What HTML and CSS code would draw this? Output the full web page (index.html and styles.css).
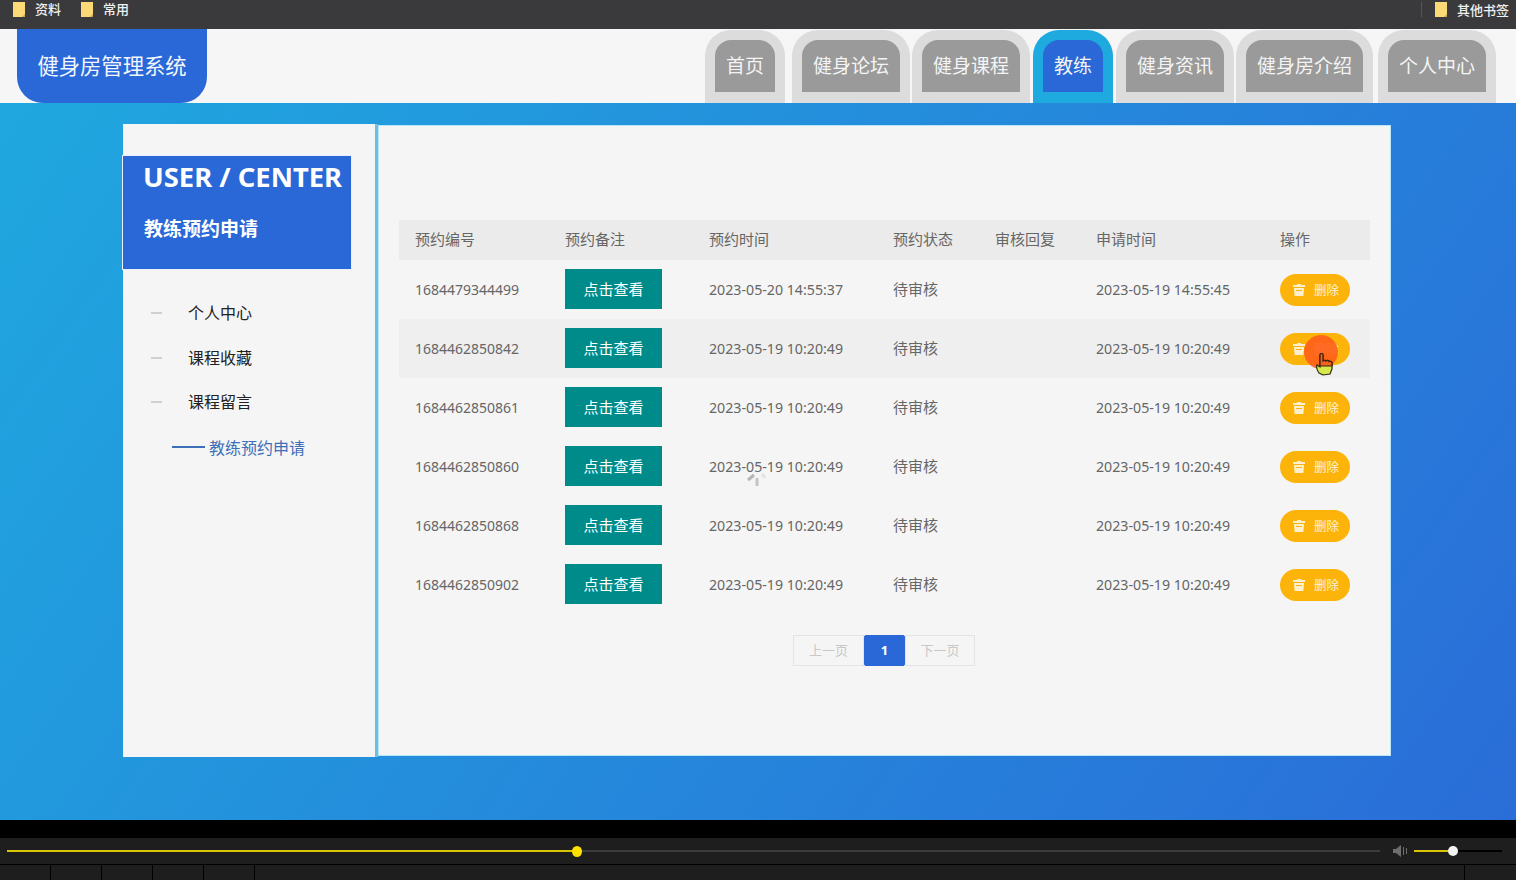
FILE: index.html
```html
<!DOCTYPE html>
<html lang="zh-CN">
<head>
    <meta charset="UTF-8">
    <title>健身房管理系统</title>
    <link rel="stylesheet" href="styles.css">
</head>
<body>
    <div class="bookmarks">
        <span class="mark"><svg class="folder" viewBox="0 0 14 15"><path d="M1 0h12v15H1z" fill="#fbd977"/><path d="M10 15l3-3v3z" fill="#c9a94e"/></svg>资料</span>
        <span class="mark"><svg class="folder" viewBox="0 0 14 15"><path d="M1 0h12v15H1z" fill="#fbd977"/><path d="M10 15l3-3v3z" fill="#c9a94e"/></svg>常用</span>
        <span class="mark mark-other"><svg class="folder" viewBox="0 0 14 15"><path d="M1 0h12v15H1z" fill="#fbd977"/><path d="M10 15l3-3v3z" fill="#c9a94e"/></svg>其他书签</span>
    </div>

    <div class="page">
        <header class="header">
            <div class="logo">健身房管理系统</div>
            <nav class="nav">
                <a class="tab"><span>首页</span></a>
                <a class="tab"><span>健身论坛</span></a>
                <a class="tab"><span>健身课程</span></a>
                <a class="tab active"><span>教练</span></a>
                <a class="tab"><span>健身资讯</span></a>
                <a class="tab"><span>健身房介绍</span></a>
                <a class="tab"><span>个人中心</span></a>
            </nav>
        </header>

        <main class="main">
            <aside class="side">
                <div class="side-title">
                    <h2>USER / CENTER</h2>
                    <h3>教练预约申请</h3>
                </div>
                <ul class="side-menu">
                    <li>个人中心</li>
                    <li>课程收藏</li>
                    <li>课程留言</li>
                    <li class="current">教练预约申请</li>
                </ul>
            </aside>

            <section class="content">
                <table class="list">
                    <colgroup>
                        <col class="c1"><col class="c2"><col class="c3"><col class="c4"><col class="c5"><col class="c6"><col class="c7">
                    </colgroup>
                    <thead>
                        <tr><th>预约编号</th><th>预约备注</th><th>预约时间</th><th>预约状态</th><th>审核回复</th><th>申请时间</th><th>操作</th></tr>
                    </thead>
                    <tbody>
                        <tr>
                            <td class="id">1684479344499</td>
                            <td><button class="view">点击查看</button></td>
                            <td class="num">2023-05-20 14:55:37</td>
                            <td>待审核</td>
                            <td></td>
                            <td class="num">2023-05-19 14:55:45</td>
                            <td class="ops"><button class="del"><svg viewBox="0 0 12 12"><path d="M4 0h4v1h4v2H0V1h4z M1 4h10l-.6 8H1.600z M3 6v1h6V6z" fill="#fff" fill-rule="evenodd"/></svg>删除</button></td>
                        </tr>
                        <tr class="hover">
                            <td class="id">1684462850842</td>
                            <td><button class="view">点击查看</button></td>
                            <td class="num">2023-05-19 10:20:49</td>
                            <td>待审核</td>
                            <td></td>
                            <td class="num">2023-05-19 10:20:49</td>
                            <td class="ops"><button class="del"><svg viewBox="0 0 12 12"><path d="M4 0h4v1h4v2H0V1h4z M1 4h10l-.6 8H1.600z M3 6v1h6V6z" fill="#fff" fill-rule="evenodd"/></svg>删除</button></td>
                        </tr>
                        <tr>
                            <td class="id">1684462850861</td>
                            <td><button class="view">点击查看</button></td>
                            <td class="num">2023-05-19 10:20:49</td>
                            <td>待审核</td>
                            <td></td>
                            <td class="num">2023-05-19 10:20:49</td>
                            <td class="ops"><button class="del"><svg viewBox="0 0 12 12"><path d="M4 0h4v1h4v2H0V1h4z M1 4h10l-.6 8H1.600z M3 6v1h6V6z" fill="#fff" fill-rule="evenodd"/></svg>删除</button></td>
                        </tr>
                        <tr>
                            <td class="id">1684462850860</td>
                            <td><button class="view">点击查看</button></td>
                            <td class="num">2023-05-19 10:20:49</td>
                            <td>待审核</td>
                            <td></td>
                            <td class="num">2023-05-19 10:20:49</td>
                            <td class="ops"><button class="del"><svg viewBox="0 0 12 12"><path d="M4 0h4v1h4v2H0V1h4z M1 4h10l-.6 8H1.600z M3 6v1h6V6z" fill="#fff" fill-rule="evenodd"/></svg>删除</button></td>
                        </tr>
                        <tr>
                            <td class="id">1684462850868</td>
                            <td><button class="view">点击查看</button></td>
                            <td class="num">2023-05-19 10:20:49</td>
                            <td>待审核</td>
                            <td></td>
                            <td class="num">2023-05-19 10:20:49</td>
                            <td class="ops"><button class="del"><svg viewBox="0 0 12 12"><path d="M4 0h4v1h4v2H0V1h4z M1 4h10l-.6 8H1.600z M3 6v1h6V6z" fill="#fff" fill-rule="evenodd"/></svg>删除</button></td>
                        </tr>
                        <tr>
                            <td class="id">1684462850902</td>
                            <td><button class="view">点击查看</button></td>
                            <td class="num">2023-05-19 10:20:49</td>
                            <td>待审核</td>
                            <td></td>
                            <td class="num">2023-05-19 10:20:49</td>
                            <td class="ops"><button class="del"><svg viewBox="0 0 12 12"><path d="M4 0h4v1h4v2H0V1h4z M1 4h10l-.6 8H1.600z M3 6v1h6V6z" fill="#fff" fill-rule="evenodd"/></svg>删除</button></td>
                        </tr>
                    </tbody>
                </table>

                <div class="pager">
                    <a class="pg">上一页</a>
                    <a class="pg pg-on">1</a>
                    <a class="pg">下一页</a>
                </div>
            </section>
        </main>
    </div>

    <div class="player">
        <div class="blackbar"></div>
        <div class="seek-row">
            <div class="seek"><div class="seek-fill"></div></div>
            <svg class="vol-icon" viewBox="0 0 15 12"><path d="M0 4h3l5-4v12L3 8H0z" fill="#6e6e6e"/><path d="M10.500 2v8M13.500 3v6" stroke="#6e6e6e"/></svg>
            <div class="vol"><div class="vol-fill"></div></div>
        </div>
        <div class="cells">
            <i></i><i></i><i></i><i></i><i></i>
            <i class="cell-last"></i>
        </div>
    </div>

    <!-- recorded cursor highlight and loading spinner sit on top of the page -->
    <div class="click-dot"></div>
    <svg class="hand" viewBox="0 0 18 24">
        <path d="M3 21c-2-3-3-6-2-8l3 2V3c0-2 3-2 3 0v6c1-1 3-1 3 0 1-1 3-1 3 .5 1-.5 3 0 3 1.500V17l-2 5-7 1z" fill="#d8e84a" stroke="#2a2a10" stroke-width="1.200"/>
        <path d="M4 3c0-2 3-2 3 0v6c1-1 3-1 3 0 1-1 3-1 3 .5 1-.5 3 0 3 1.500v3H4z" fill="#f2641e" stroke="#3a2010" stroke-width="1.200"/>
    </svg>
    <svg class="spinner" viewBox="0 0 22 16">
        <path d="M2 9l6-5" stroke="#b5b5b5" stroke-width="3"/>
        <path d="M11 7v8" stroke="#c4c4c4" stroke-width="3"/>
        <path d="M16 3l3 4" stroke="#e4e4e4" stroke-width="3"/>
    </svg>
</body>
</html>
```

FILE: styles.css
```css
* {
    box-sizing: border-box;
}

body {
    margin: 0;
    width: 1516px;
    height: 880px;
    overflow: hidden;
    display: flex;
    flex-direction: column;
    position: relative;
    font-family: "Noto Sans", "Noto Sans CJK SC", sans-serif;
    background: #000;
}

.bookmarks {
    height: 29px;
    flex: none;
    display: flex;
    align-items: flex-start;
    padding: 0 7px 0 12px;
    background: #3a393b;
    color: #f0f0f0;
    font-family: "Noto Sans CJK SC", sans-serif;
    font-size: 13px;
    font-weight: 500;
    line-height: 15px;
}

.mark {
    display: flex;
    align-items: center;
    margin-right: 19px;
}

.folder {
    width: 14px;
    height: 15px;
    margin: 2px 9px 0 0;
}

.mark-other {
    margin: 2px 0 0 auto;
    padding-left: 12px;
    border-left: 1px solid #555;
}

.mark-other .folder {
    margin-top: 0;
}

.page {
    flex: 1;
    display: flex;
    flex-direction: column;
    background: linear-gradient(125deg, #1fa9df, #2a6dd8);
}

.header {
    height: 74px;
    flex: none;
    display: flex;
    justify-content: space-between;
    padding: 0 20px 0 17px;
    background: #f6f6f6;
}

.logo {
    width: 190px;
    height: 74px;
    background: #2968d6;
    border-radius: 0 0 26px 26px;
    color: #f2f6ff;
    font-size: 21.300px;
    line-height: 74px;
    text-align: center;
}

.nav {
    display: flex;
    gap: 2px;
}

.tab {
    display: block;
    padding: 10px 10px 11px;
    margin-top: 1px;
    height: 73px;
    background: #dcdcdc;
    border-radius: 26px 26px 0 0;
}

.tab:nth-child(1) {
    margin-right: 5px;
}

.tab:nth-child(3),
.tab:nth-child(4) {
    margin-right: 1px;
}

.tab:nth-child(7) {
    margin-left: 3px;
}

.tab span {
    display: block;
    height: 52px;
    padding: 0 11px;
    background: #9a9a9a;
    border-radius: 16px 16px 0 0;
    color: #f4f4f4;
    font-size: 19px;
    line-height: 52px;
}

.tab.active {
    background: #1ea9df;
}

.tab.active span {
    background: #2968d6;
}

.main {
    flex: 1;
    display: flex;
    align-items: flex-start;
    padding: 21px 0 0 123px;
}

.side {
    width: 255px;
    height: 633px;
    padding-top: 32px;
    background: #f5f5f5;
    border-right: 3px solid #6dbfe2;
}

.side-title {
    width: 228px;
    height: 113px;
    padding: 0 0 0 21px;
    background: #2968d6;
    color: #fff;
    outline: 1px solid #e9eefb;
}

.side-title h2 {
    margin: 0 0 0 -1px;
    padding-top: 2px;
    font-size: 27.400px;
    font-weight: 700;
    line-height: 38px;
    white-space: nowrap;
}

.side-title h3 {
    margin: 0;
    padding-top: 19px;
    font-size: 19px;
    font-weight: 700;
    line-height: 28px;
}

.side-menu {
    list-style: none;
    margin: 0;
    padding: 22px 0 0 65px;
    color: #222;
    font-size: 16px;
    line-height: 44.500px;
}

.side-menu li {
    position: relative;
}

.side-menu li::before {
    content: "";
    position: absolute;
    left: -37px;
    top: 21px;
    width: 11px;
    height: 2px;
    background: #cfcfcf;
}

.side-menu .current {
    padding: 1px 0 0 21px;
    color: #3d6fb8;
}

.side-menu .current::before {
    left: -16px;
    width: 33px;
    background: #3d6fb8;
}

.content {
    width: 1013px;
    height: 631px;
    margin-top: 1px;
    padding: 94px 21px 0 20px;
    background: #f5f5f5;
    border: 1px solid #b9e6f6;
}

.list {
    width: 971px;
    table-layout: fixed;
    border-collapse: collapse;
    font-size: 15px;
    color: #666;
}

.c1 { width: 150px; }
.c2 { width: 144px; }
.c3 { width: 184px; }
.c4 { width: 102px; }
.c5 { width: 101px; }
.c6 { width: 184px; }
.c7 { width: 106px; }

.list th {
    height: 40px;
    padding: 0 0 3px 16px;
    background: #ebebeb;
    font-weight: 400;
    text-align: left;
}

.list td {
    height: 59px;
    padding: 0 0 2px 16px;
}

.list .num {
    padding-bottom: 0;
    font-size: 14.200px;
}

.list .id {
    padding-bottom: 0;
    font-size: 14px;
}

.list .ops {
    padding-bottom: 0;
}

.list .hover td {
    background: #efefef;
}

.view {
    width: 97px;
    height: 40px;
    padding: 0;
    border: none;
    display: block;
    background: #008b8b;
    color: #fff;
    font-family: inherit;
    font-size: 15px;
}

.del {
    width: 70px;
    height: 32px;
    padding: 0 0 0 13px;
    border: none;
    border-radius: 16px;
    display: flex;
    align-items: center;
    gap: 9px;
    background: #fdb40a;
    color: #fff3d6;
    font-family: inherit;
    font-size: 12.500px;
}

.del svg {
    width: 12px;
    height: 12px;
    opacity: 0.8;
}

.pager {
    display: flex;
    justify-content: center;
    margin-top: 21px;
    font-size: 13px;
    line-height: 29px;
    text-align: center;
    color: #c8c8c8;
}

.pg {
    width: 70px;
    height: 31px;
    border: 1px solid #e4e4e4;
}

.pg:first-child {
    width: 71px;
}

.pg-on {
    width: 41px;
    background: #2968d6;
    border: 1px solid #2968d6;
    border-radius: 2px;
    color: #fff;
    font-weight: 700;
}

.player {
    height: 60px;
    flex: none;
    background: #1e1e1e;
}

.blackbar {
    height: 18px;
    background: #000;
}

.seek-row {
    height: 27px;
    display: flex;
    align-items: center;
    padding: 0 14px 0 7px;
    border-bottom: 1px solid #000;
}

.seek {
    width: 1373px;
    height: 2px;
    background: #3c3c3c;
    position: relative;
}

.seek-fill {
    width: 570px;
    height: 2px;
    background: #d8c400;
    position: relative;
}

.seek-fill::after {
    content: "";
    position: absolute;
    right: -5px;
    top: -4px;
    width: 10px;
    height: 11px;
    border-radius: 50%;
    background: #ffe000;
}

.vol-icon {
    width: 15px;
    height: 12px;
    margin-left: 13px;
}

.vol {
    width: 88px;
    height: 2px;
    margin-left: 6px;
    background: #000;
}

.vol-fill {
    width: 39px;
    height: 2px;
    background: #d8c400;
    position: relative;
}

.vol-fill::after {
    content: "";
    position: absolute;
    right: -5px;
    top: -4px;
    width: 10px;
    height: 10px;
    border-radius: 50%;
    background: #f2f2f2;
}

.cells {
    height: 15px;
    display: flex;
}

.cells i {
    width: 51px;
    border-right: 1px solid #000;
}

.cells .cell-last {
    margin-left: auto;
    width: 52px;
    border-right: none;
    border-left: 1px solid #000;
}

.click-dot {
    position: absolute;
    left: 1304px;
    top: 335px;
    width: 34px;
    height: 34px;
    border-radius: 50%;
    background: rgba(255, 92, 26, 0.88);
}

.hand {
    position: absolute;
    left: 1316px;
    top: 352px;
    width: 18px;
    height: 24px;
}

.spinner {
    position: absolute;
    left: 746px;
    top: 471px;
    width: 22px;
    height: 16px;
}
```
